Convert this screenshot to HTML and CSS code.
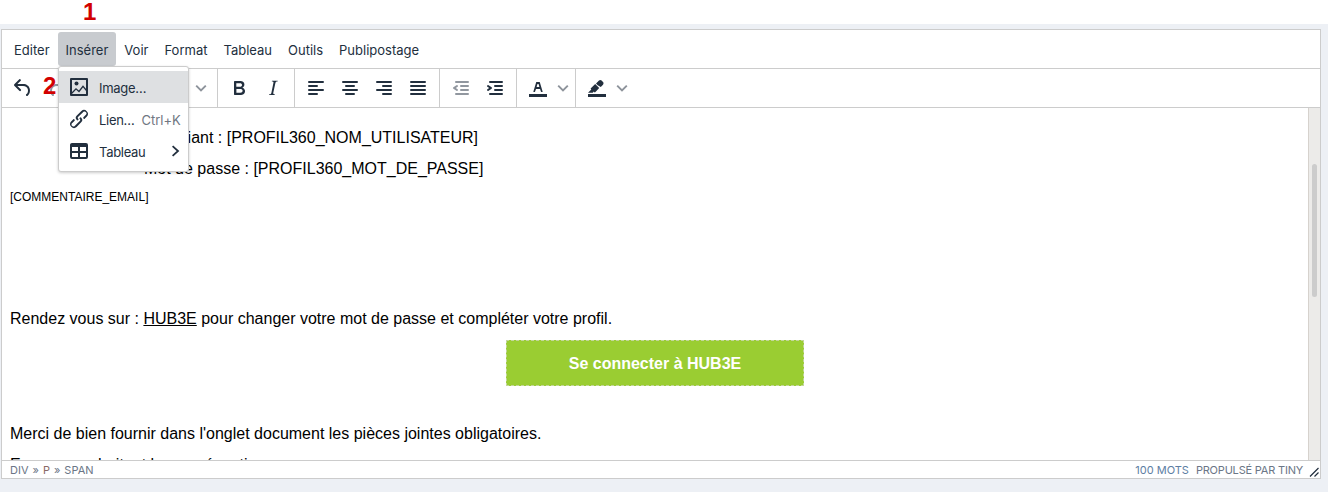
FILE: index.html
```html
<!DOCTYPE html>
<html lang="fr">
<head>
    <meta charset="UTF-8">
    <title>Editeur</title>
    <link rel="stylesheet" href="styles.css">
</head>
<body>
    <div class="step step-1">1</div>

    <div class="page">
        <div class="editor">
            <!-- Barre de menu -->
            <div class="menubar">
                <span class="menu-btn">Editer</span>
                <span class="menu-btn active">Insérer</span>
                <span class="menu-btn">Voir</span>
                <span class="menu-btn">Format</span>
                <span class="menu-btn">Tableau</span>
                <span class="menu-btn">Outils</span>
                <span class="menu-btn">Publipostage</span>
            </div>

            <!-- Barre d'outils -->
            <div class="toolbar">
                <div class="tool-group">
                    <span class="tool"><svg viewBox="0 0 24 24"><path d="M6.4 8H12c3.7 0 6.2 2 6.8 5.1.6 2.7-.4 5.6-2.3 6.8a1 1 0 0 1-1-1.8c1.100-.6 1.800-2.700 1.400-4.600-.5-2.100-2.100-3.500-4.900-3.500H6.400l3.300 3.300a1 1 0 1 1-1.400 1.400l-5-5a1 1 0 0 1 0-1.400l5-5a1 1 0 0 1 1.400 1.400L6.400 8z"/></svg></span>
                    <span class="tool dim"><svg viewBox="0 0 24 24"><path d="M17.600 10H12c-2.800 0-4.400 1.400-4.900 3.500-.4 2 .3 4 1.400 4.600a1 1 0 1 1-1 1.800c-2-1.200-2.900-4.100-2.300-6.800.6-3 3-5.100 6.800-5.100h5.600l-3.300-3.300a1 1 0 1 1 1.400-1.400l5 5a1 1 0 0 1 0 1.400l-5 5a1 1 0 0 1-1.400-1.400l3.300-3.300z"/></svg></span>
                </div>
                <div class="tool-group format-select">
                    <svg class="chevron" viewBox="0 0 10 10"><polyline points="1,3 5,7 9,3"/></svg>
                </div>
                <div class="tool-group">
                    <span class="tool"><svg viewBox="0 0 24 24"><path d="M7.800 19c-.3 0-.5 0-.6-.2l-.2-.5V5.700c0-.2 0-.4.2-.5l.6-.2h5c1.500 0 2.700.3 3.500 1 .7.600 1.100 1.400 1.100 2.500a3 3 0 0 1-.6 1.900c-.4.600-1 1-1.600 1.200.4.100.9.300 1.300.6s.8.700 1 1.200c.4.400.5 1 .5 1.600 0 1.300-.4 2.300-1.300 3-.8.700-2.100 1-3.800 1H7.800zm5-8.300c.6 0 1.200-.1 1.600-.5.4-.3.6-.7.6-1.300 0-1.100-.8-1.700-2.300-1.700H9.300v3.500h3.500zm.5 6c.7 0 1.300-.1 1.700-.4.4-.4.6-.9.6-1.500s-.2-1-.7-1.400c-.4-.3-1-.4-2-.4H9.400v3.700h3.900z"/></svg></span>
                    <span class="tool"><svg viewBox="0 0 24 24"><path d="M16.700 4.700l-.1.900h-.3c-.6 0-1 0-1.400.3-.3.3-.4.600-.5 1.100l-2.100 9.800v.6c0 .5.4.8 1.400.8h.2l-.2.8H8l.2-.8h.2c1.100 0 1.800-.5 2-1.500l2-9.800.1-.5c0-.6-.4-.8-1.400-.8h-.3l.2-.9h5.800z"/></svg></span>
                </div>
                <div class="tool-group">
                    <span class="tool"><svg viewBox="0 0 24 24"><path d="M5 5h14a1 1 0 0 1 0 2H5a1 1 0 1 1 0-2zm0 4h8a1 1 0 0 1 0 2H5a1 1 0 1 1 0-2zm0 8h8a1 1 0 0 1 0 2H5a1 1 0 0 1 0-2zm0-4h14a1 1 0 0 1 0 2H5a1 1 0 0 1 0-2z"/></svg></span>
                    <span class="tool"><svg viewBox="0 0 24 24"><path d="M5 5h14a1 1 0 0 1 0 2H5a1 1 0 1 1 0-2zm3 4h8a1 1 0 0 1 0 2H8a1 1 0 1 1 0-2zm0 8h8a1 1 0 0 1 0 2H8a1 1 0 0 1 0-2zm-3-4h14a1 1 0 0 1 0 2H5a1 1 0 0 1 0-2z"/></svg></span>
                    <span class="tool"><svg viewBox="0 0 24 24"><path d="M5 5h14a1 1 0 0 1 0 2H5a1 1 0 1 1 0-2zm6 4h8a1 1 0 0 1 0 2h-8a1 1 0 0 1 0-2zm0 8h8a1 1 0 0 1 0 2h-8a1 1 0 0 1 0-2zm-6-4h14a1 1 0 0 1 0 2H5a1 1 0 0 1 0-2z"/></svg></span>
                    <span class="tool"><svg viewBox="0 0 24 24"><path d="M5 5h14a1 1 0 0 1 0 2H5a1 1 0 1 1 0-2zm0 4h14a1 1 0 0 1 0 2H5a1 1 0 1 1 0-2zm0 4h14a1 1 0 0 1 0 2H5a1 1 0 0 1 0-2zm0 4h14a1 1 0 0 1 0 2H5a1 1 0 0 1 0-2z"/></svg></span>
                </div>
                <div class="tool-group">
                    <span class="tool dim"><svg viewBox="0 0 24 24"><path d="M7 5h12a1 1 0 0 1 0 2H7a1 1 0 1 1 0-2zm5 4h7a1 1 0 0 1 0 2h-7a1 1 0 0 1 0-2zm0 4h7a1 1 0 0 1 0 2h-7a1 1 0 0 1 0-2zm-5 4h12a1 1 0 0 1 0 2H7a1 1 0 0 1 0-2zm1.600-3.800a1 1 0 0 1-1.200 1.600l-3-2a1 1 0 0 1 0-1.600l3-2a1 1 0 0 1 1.200 1.600L6.800 12l1.800 1.200z"/></svg></span>
                    <span class="tool"><svg viewBox="0 0 24 24"><path d="M7 5h12a1 1 0 0 1 0 2H7a1 1 0 1 1 0-2zm5 4h7a1 1 0 0 1 0 2h-7a1 1 0 0 1 0-2zm0 4h7a1 1 0 0 1 0 2h-7a1 1 0 0 1 0-2zm-5 4h12a1 1 0 0 1 0 2H7a1 1 0 0 1 0-2zm-2.600-3.800L6.200 12l-1.800-1.200a1 1 0 0 1 1.200-1.600l3 2a1 1 0 0 1 0 1.600l-3 2a1 1 0 1 1-1.200-1.600z"/></svg></span>
                </div>
                <div class="tool-group">
                    <span class="tool split"><svg viewBox="0 0 24 24"><path d="M3 18h18v3H3z"/><path d="M8.700 16h-.8a.5.5 0 0 1-.5-.6l2.700-9c.1-.3.3-.4.5-.4h2.800c.2 0 .4.100.5.400l2.700 9a.5.5 0 0 1-.5.600h-.8a.5.5 0 0 1-.4-.4l-.7-2.200c0-.3-.3-.4-.5-.4h-3.400c-.2 0-.4.100-.5.400l-.7 2.200c0 .3-.2.400-.4.400zm2.600-7.600l-.6 2a.5.5 0 0 0 .5.600h1.600a.5.5 0 0 0 .5-.6l-.6-2c0-.3-.3-.4-.5-.4h-.4c-.2 0-.4.100-.5.400z"/></svg><svg class="chevron" viewBox="0 0 10 10"><polyline points="1,3 5,7 9,3"/></svg></span>
                </div>
                <div class="tool-group last">
                    <span class="tool split"><svg viewBox="0 0 24 24"><path d="M3 18h18v3H3z"/><path d="M7.700 16.700H3l3.300-3.300-.7-.8L10.200 8l4 4.100-4 4.200c-.2.200-.6.200-.8 0l-.6-.7-1.100 1.100zm5-7.500L11 7.400l3-2.900a2 2 0 0 1 2.600 0L18 6c.7.700.7 2 0 2.700l-2.200 2.200-3.100-1.700z"/></svg><svg class="chevron" viewBox="0 0 10 10"><polyline points="1,3 5,7 9,3"/></svg></span>
                </div>
            </div>

            <!-- Zone de texte -->
            <div class="edit-area">
                <div class="doc">
                    <p class="line indented first">Identifiant : [PROFIL360_NOM_UTILISATEUR]</p>
                    <p class="line indented">Mot de passe : [PROFIL360_MOT_DE_PASSE]</p>
                    <p class="comment">[COMMENTAIRE_EMAIL]</p>
                    <p class="line go-hub">Rendez vous sur : <u>HUB3E</u> pour changer votre mot de passe et compléter votre profil.</p>
                    <div class="cta-row"><a class="cta">Se connecter à HUB3E</a></div>
                    <p class="line after-cta">Merci de bien fournir dans l'onglet document les pièces jointes obligatoires.</p>
                    <p class="line">En vous souhaitant bonne réception</p>
                </div>
                <div class="scrollbar"><div class="thumb"></div></div>
            </div>

            <!-- Barre de statut -->
            <div class="statusbar">
                <span class="path"><span>DIV</span><i>»</i><span class="tag-p">P</span><i>»</i><span>SPAN</span></span>
                <span class="words">100 MOTS</span>
                <span class="brand">PROPULSÉ PAR TINY</span>
                <svg class="resize" viewBox="0 0 10 10"><path d="M1 9.500L9.500 1M5.500 9.500L9.500 5.500"/></svg>
            </div>
        </div>
    </div>

    <!-- Menu ouvert -->
    <div class="dropdown">
        <div class="drop-item selected">
            <svg viewBox="0 0 24 24"><path fill-rule="evenodd" d="M4 3h16a1 1 0 0 1 1 1v16a1 1 0 0 1-1 1H4a1 1 0 0 1-1-1V4a1 1 0 0 1 1-1zm1 2v14h14V5H5z"/><circle cx="9.500" cy="8.500" r="2"/><path class="ridge" d="M4.500 18.500l4.500-4.700 3 2.700 4-5.200 3.500 4.200"/></svg>
            <span>Image…</span>
        </div>
        <div class="drop-item">
            <svg viewBox="0 0 24 24"><path d="M6.200 12.300a1 1 0 0 1 1.400 1.400l-2 2a2 2 0 1 0 2.600 2.800l4.800-4.800a1 1 0 0 0 0-1.400 1 1 0 1 1 1.400-1.300 2.900 2.900 0 0 1 0 4L9.600 20a3.900 3.900 0 0 1-5.500-5.500l2-2zm11.600-.6a1 1 0 0 1-1.400-1.400l2-2a2 2 0 1 0-2.600-2.800L11 10a1 1 0 0 0 0 1.400 1 1 0 1 1-1.400 1.300 2.900 2.900 0 0 1 0-4L14.400 4a3.900 3.900 0 0 1 5.500 5.500l-2 2z"/></svg>
            <span>Lien…</span>
            <span class="shortcut">Ctrl+K</span>
        </div>
        <div class="drop-item">
            <svg viewBox="0 0 24 24"><path fill-rule="evenodd" d="M19 4a2 2 0 0 1 2 2v12a2 2 0 0 1-2 2H5a2 2 0 0 1-2-2V6c0-1.100.9-2 2-2h14zM5 14v4h6v-4H5zm14 0h-6v4h6v-4zm0-6h-6v4h6V8zM5 12h6V8H5v4z"/></svg>
            <span>Tableau</span>
            <svg class="arrow" viewBox="0 0 10 10"><polyline points="3,1 7.500,5 3,9"/></svg>
        </div>
    </div>

    <div class="step step-2">2</div>
</body>
</html>
```

FILE: styles.css
```css
body {
    margin: 0;
    height: 492px;
    overflow: hidden;
    background: #fff;
    font-family: 'Inter', Arial, sans-serif;
    color: #222f3e;
    position: relative;
}
.page {
    margin-top: 24px;
    height: 468px;
    box-sizing: border-box;
    padding: 5px 7px 0 1px;
    background: #edf0f5;
}
.editor {
    height: 450px;
    box-sizing: border-box;
    display: flex;
    flex-direction: column;
    background: #fff;
    border: 1px solid #ccc;
}

/* MENU */
.menubar {
    height: 39px;
    box-sizing: border-box;
    flex: none;
    display: flex;
    align-items: center;
    padding: 0 4px;
    border-bottom: 1px solid #ccc;
}
.menu-btn {
    height: 34px;
    box-sizing: border-box;
    display: flex;
    align-items: center;
    padding: 2px 8px 0;
    font-size: 13px;
    border-radius: 3px;
}
.menu-btn.active {
    background: #c8cbcf;
}

/* TOOLBAR */
.toolbar {
    height: 39px;
    box-sizing: border-box;
    flex: none;
    display: flex;
    border-bottom: 1px solid #ccc;
}
.tool-group {
    display: flex;
    align-items: center;
    padding: 0 4px;
    border-right: 1px solid #ccc;
}
.tool-group.last {
    border-right: 0;
}
.format-select {
    width: 139px;
    box-sizing: border-box;
    justify-content: flex-end;
    padding-right: 10px;
}
.tool {
    width: 34px;
    height: 34px;
    display: flex;
    align-items: center;
    justify-content: center;
}
.tool svg {
    width: 24px;
    height: 24px;
    fill: #222f3e;
}
.tool.dim svg {
    fill: #91979f;
}
.tool.split {
    width: 50px;
    justify-content: flex-start;
    padding-left: 5px;
    box-sizing: border-box;
}
.tool svg.chevron,
.chevron {
    width: 12px;
    height: 12px;
    fill: none;
    stroke: #8d939b;
    stroke-width: 1.600;
    flex: none;
}
.tool svg.chevron {
    margin-left: 7px;
}

/* OBSAH */
.edit-area {
    flex: 1;
    min-height: 0;
    display: flex;
}
.doc {
    flex: 1;
    overflow: hidden;
    padding: 0 8px;
    font-family: 'Liberation Sans', Arial, sans-serif;
    font-size: 16px;
    line-height: 18px;
    color: #000;
}
.line {
    margin: 13px 0 0;
}
.line.first {
    margin-top: 21px;
}
.line.indented {
    padding-left: 134px;
}
.comment {
    margin: 12px 0 0;
    font-size: 12px;
    line-height: 14px;
}
.go-hub {
    margin-top: 106px;
}
.cta-row {
    margin-top: 12px;
    display: flex;
    justify-content: center;
}
.cta {
    width: 298px;
    height: 46px;
    box-sizing: border-box;
    padding-top: 1px;
    display: flex;
    align-items: center;
    justify-content: center;
    background: #9acd32;
    border: 1px dashed #c3d69b;
    color: #fff;
    font-weight: bold;
}
.line.after-cta {
    margin-top: 39px;
}
.scrollbar {
    width: 12px;
    flex: none;
    background: #ecebe9;
    border-left: 1px solid #d6d2cd;
    padding: 56px 3px 0;
    box-sizing: border-box;
}
.thumb {
    height: 133px;
    background: #ccc;
    border-radius: 3px;
}

/* STATUS */
.statusbar {
    height: 18px;
    box-sizing: border-box;
    flex: none;
    display: flex;
    align-items: center;
    padding: 0 1px 0 8px;
    border-top: 1px solid #ccc;
    font-size: 11px;
    color: #6b7686;
}
.path {
    flex: 1;
    display: flex;
    gap: 4px;
}
.path i {
    font-style: normal;
}
.tag-p {
    color: #8a6a66;
}
.words {
    color: #5d7ea3;
    margin-right: 7px;
}
.brand {
    letter-spacing: -0.2px;
}
.resize {
    width: 10px;
    height: 10px;
    margin-left: 6px;
    margin-top: 4px;
    fill: none;
    stroke: #222f3e;
    stroke-width: 1.200;
}

/* DROPDOWN */
.dropdown {
    position: absolute;
    left: 58px;
    top: 66px;
    width: 131px;
    height: 106px;
    box-sizing: border-box;
    padding: 4px 0;
    background: #fff;
    border: 1px solid #ccc;
    border-radius: 3px;
    box-shadow: 0 1px 3px rgba(0,0,0,0.2);
}
.drop-item {
    height: 32px;
    display: flex;
    align-items: center;
    padding-left: 8px;
    font-size: 13px;
    position: relative;
}
.drop-item > span {
    padding-top: 2px;
    letter-spacing: -0.3px;
}
.drop-item.selected {
    background: #dee0e2;
}
.drop-item > svg:first-child {
    width: 24px;
    height: 24px;
    fill: #222f3e;
    margin-right: 8px;
    flex: none;
}
.drop-item svg .ridge {
    fill: none;
    stroke: #222f3e;
    stroke-width: 1.300;
}
.drop-item > .shortcut {
    margin-left: 7px;
    color: #6f7782;
    letter-spacing: 0;
}
.arrow {
    position: absolute;
    right: 7px;
    top: 10px;
    width: 12px;
    height: 12px;
    fill: none;
    stroke: #222f3e;
    stroke-width: 1.500;
}

/* ANNOTATIONS */
.step {
    position: absolute;
    font-family: 'Liberation Sans', Arial, sans-serif;
    font-weight: bold;
    font-size: 24px;
    line-height: 24px;
    color: #d20000;
}
.step-1 {
    left: 83px;
    top: 0;
}
.step-2 {
    left: 43px;
    top: 74px;
}
```
